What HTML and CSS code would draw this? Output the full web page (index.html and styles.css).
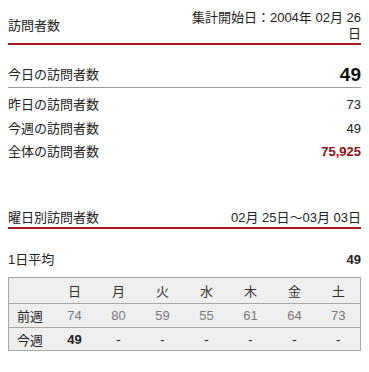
FILE: index.html
```html
<!DOCTYPE html>
<html lang="ja">
<head>
<meta charset="utf-8">
<link rel="stylesheet" href="styles.css">
</head>
<body>
<div class="head first">
  <div class="head-title">訪問者数</div>
  <div class="head-note">集計開始日：2004年 02月 26日</div>
</div>
<div class="row today">
  <span>今日の訪問者数</span>
  <span class="big">49</span>
</div>
<div class="row"><span>昨日の訪問者数</span><span>73</span></div>
<div class="row"><span>今週の訪問者数</span><span>49</span></div>
<div class="row"><span>全体の訪問者数</span><span class="total">75,925</span></div>

<div class="head second">
  <div class="head-title">曜日別訪問者数</div>
  <div class="head-range">02月 25日～03月 03日</div>
</div>
<div class="row avg"><span>1日平均</span><span class="bold">49</span></div>

<table class="week">
  <colgroup><col class="label-col"><col><col><col><col><col><col><col></colgroup>
  <tr class="wk-head"><th></th><th>日</th><th>月</th><th>火</th><th>水</th><th>木</th><th>金</th><th>土</th></tr>
  <tr class="prev"><td class="lbl">前週</td><td>74</td><td>80</td><td>59</td><td>55</td><td>61</td><td>64</td><td>73</td></tr>
  <tr class="cur"><td class="lbl">今週</td><td class="bold">49</td><td>-</td><td>-</td><td>-</td><td>-</td><td>-</td><td>-</td></tr>
</table>
</body>
</html>
```

FILE: styles.css
```css
body {
  margin: 8px;
  font-family: "Liberation Sans", "Noto Sans CJK JP", sans-serif;
  font-size: 13px;
  color: #222;
  background: #fff;
}
.head {
  display: flex;
  justify-content: space-between;
  align-items: center;
  border-bottom: 2px solid #a11a1a;
  line-height: 16px;
  padding-bottom: 1px;
}
.head.first {
  padding-top: 2px;
}
.head-note {
  width: 50%;
  text-align: right;
}
.head.second {
  margin-top: 46px;
}
.row {
  display: flex;
  justify-content: space-between;
  align-items: center;
  line-height: 23.5px;
}
.row.today {
  margin-top: 18px;
  border-bottom: 1px solid #9a9a9a;
  line-height: 24px;
  margin-bottom: 5px;
}
.big {
  font-size: 19px;
  font-weight: bold;
  color: #111;
}
.total {
  font-weight: bold;
  color: #8e1212;
}
.bold {
  font-weight: bold;
}
.row.avg {
  margin-top: 19px;
}
.week {
  width: 100%;
  margin-top: 6px;
  border-collapse: collapse;
  table-layout: fixed;
  background: #efefef;
  border: 1px solid #a8a8a8;
}
.label-col {
  width: 44px;
}
.week th, .week td {
  text-align: center;
  padding: 0;
  font-weight: normal;
}
.week tr + tr td {
  border-top: 1px solid #a8a8a8;
}
.wk-head th {
  height: 25px;
  color: #333;
}
.prev td {
  height: 23px;
  color: #7a7a7a;
}
.cur td {
  height: 22px;
  color: #222;
}
.week td.lbl {
  text-align: left;
  padding-left: 8px;
  color: #222;
}
.week td.bold {
  font-weight: bold;
}
```
